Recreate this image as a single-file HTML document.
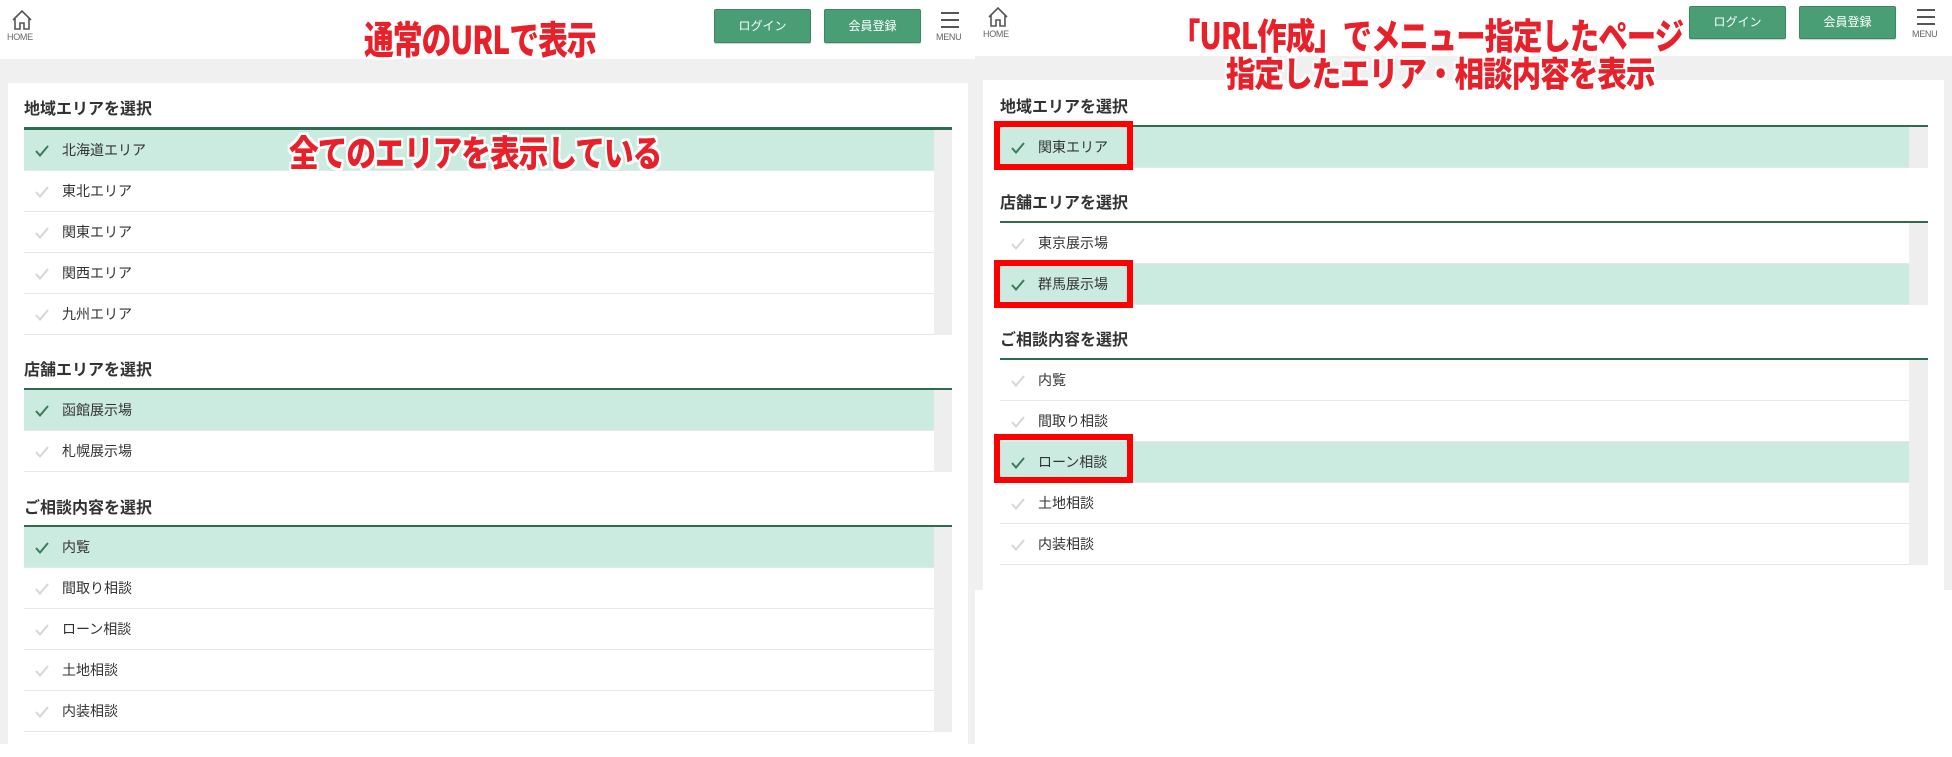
<!DOCTYPE html>
<html><head><meta charset="utf-8">
<style>
*{margin:0;padding:0;box-sizing:border-box}
body{width:1952px;height:757px;position:relative;background:#fff;overflow:hidden;font-family:"Liberation Sans","Noto Sans CJK JP",sans-serif;color:#333}
.a{position:absolute}
.gray{background:#f0f0f0}
.card{background:#fff}
.h{position:absolute;font-size:16px;font-weight:bold;color:#333;line-height:20px}
.line{position:absolute;height:3px;background:#2f6b4f}
.row{position:absolute;height:41px;border-bottom:1px solid #e6e6e6;background:#fff;font-size:14px;line-height:40px}
.row.on{background:#cbeae0}
.row svg{position:absolute;left:11px;top:15px}
.row span{position:absolute;left:38px;top:0}
.sb{position:absolute;background:#eee}
.btn{position:absolute;background:#4a9e76;border:1px solid #3d8563;border-radius:2px;color:#fff;font-size:12px;text-align:center;box-shadow:0 1px 1px rgba(0,0,0,.2)}
.small{position:absolute;font-size:9px;color:#666;letter-spacing:-0.3px}
.red{position:absolute;color:#e8202a;font-weight:900;font-family:"Noto Sans CJK JP",sans-serif;white-space:nowrap;letter-spacing:-1px;
text-shadow:2px 0 #fff,-2px 0 #fff,0 2px #fff,0 -2px #fff,2px 2px #fff,-2px -2px #fff,2px -2px #fff,-2px 2px #fff;transform-origin:0 0}
.box{position:absolute;border:6px solid #f00}
</style></head><body>

<!-- LEFT PANEL -->
<div class="a gray" style="left:0;top:59px;width:975px;height:685px"></div>
<div class="a card" style="left:8px;top:83px;width:960px;height:661px"></div>

<svg class="a" style="left:10px;top:9px" width="24" height="22" viewBox="0 0 24 22"><path d="M3 11 L12 2 L21 11 M5 9 V20 H10 V14 H14 V20 H19 V9" fill="none" stroke="#555" stroke-width="1.6"/></svg>
<div class="small" style="left:7px;top:32px">HOME</div>
<div class="red" style="left:364px;top:11px;font-size:32px;transform:scale(0.93,1.2)">通常のURLで表示</div>
<div class="btn" style="left:714px;top:9px;width:97px;height:34px;line-height:32px">ログイン</div>
<div class="btn" style="left:824px;top:9px;width:97px;height:34px;line-height:32px">会員登録</div>
<div class="a" style="left:941px;top:12px;width:18px;height:16px;border-top:2px solid #555;border-bottom:2px solid #555"><div style="margin-top:5px;height:2px;background:#555"></div></div>
<div class="small" style="left:936px;top:32px">MENU</div>

<div class="h" style="left:24px;top:100px">地域エリアを選択</div>
<div class="line" style="left:24px;top:127px;width:928px"></div>
<div class="sb" style="left:934px;top:130px;width:18px;height:205px"></div>

<div class="h" style="left:24px;top:361px">店舗エリアを選択</div>
<div class="line" style="left:24px;top:388px;width:928px"></div>
<div class="sb" style="left:934px;top:390px;width:18px;height:82px"></div>

<div class="h" style="left:24px;top:499px">ご相談内容を選択</div>
<div class="line" style="left:24px;top:525px;width:928px"></div>
<div class="sb" style="left:934px;top:527px;width:18px;height:205px"></div>

<div class="row on" style="left:24px;top:130px;width:910px"><svg width="14" height="12"><path d="M1 6 L5 10.5 L13 1" fill="none" stroke="#3b7a5b" stroke-width="2"/></svg><span>北海道エリア</span></div>
<div class="row" style="left:24px;top:171px;width:910px"><svg width="14" height="12"><path d="M1 6 L5 10.5 L13 1" fill="none" stroke="#d6d6d6" stroke-width="2"/></svg><span>東北エリア</span></div>
<div class="row" style="left:24px;top:212px;width:910px"><svg width="14" height="12"><path d="M1 6 L5 10.5 L13 1" fill="none" stroke="#d6d6d6" stroke-width="2"/></svg><span>関東エリア</span></div>
<div class="row" style="left:24px;top:253px;width:910px"><svg width="14" height="12"><path d="M1 6 L5 10.5 L13 1" fill="none" stroke="#d6d6d6" stroke-width="2"/></svg><span>関西エリア</span></div>
<div class="row" style="left:24px;top:294px;width:910px"><svg width="14" height="12"><path d="M1 6 L5 10.5 L13 1" fill="none" stroke="#d6d6d6" stroke-width="2"/></svg><span>九州エリア</span></div>

<div class="row on" style="left:24px;top:390px;width:910px"><svg width="14" height="12"><path d="M1 6 L5 10.5 L13 1" fill="none" stroke="#3b7a5b" stroke-width="2"/></svg><span>函館展示場</span></div>
<div class="row" style="left:24px;top:431px;width:910px"><svg width="14" height="12"><path d="M1 6 L5 10.5 L13 1" fill="none" stroke="#d6d6d6" stroke-width="2"/></svg><span>札幌展示場</span></div>

<div class="row on" style="left:24px;top:527px;width:910px"><svg width="14" height="12"><path d="M1 6 L5 10.5 L13 1" fill="none" stroke="#3b7a5b" stroke-width="2"/></svg><span>内覧</span></div>
<div class="row" style="left:24px;top:568px;width:910px"><svg width="14" height="12"><path d="M1 6 L5 10.5 L13 1" fill="none" stroke="#d6d6d6" stroke-width="2"/></svg><span>間取り相談</span></div>
<div class="row" style="left:24px;top:609px;width:910px"><svg width="14" height="12"><path d="M1 6 L5 10.5 L13 1" fill="none" stroke="#d6d6d6" stroke-width="2"/></svg><span>ローン相談</span></div>
<div class="row" style="left:24px;top:650px;width:910px"><svg width="14" height="12"><path d="M1 6 L5 10.5 L13 1" fill="none" stroke="#d6d6d6" stroke-width="2"/></svg><span>土地相談</span></div>
<div class="row" style="left:24px;top:691px;width:910px"><svg width="14" height="12"><path d="M1 6 L5 10.5 L13 1" fill="none" stroke="#d6d6d6" stroke-width="2"/></svg><span>内装相談</span></div>

<div class="red" style="left:289px;top:124px;font-size:30px;transform:scale(0.99,1.2)">全てのエリアを表示している</div>

<!-- RIGHT PANEL -->
<div class="a gray" style="left:975px;top:56px;width:977px;height:534px"></div>
<div class="a card" style="left:983px;top:80px;width:961px;height:510px"></div>

<svg class="a" style="left:986px;top:6px" width="24" height="22" viewBox="0 0 24 22"><path d="M3 11 L12 2 L21 11 M5 9 V20 H10 V14 H14 V20 H19 V9" fill="none" stroke="#555" stroke-width="1.6"/></svg>
<div class="small" style="left:983px;top:29px">HOME</div>
<div class="btn" style="left:1689px;top:6px;width:97px;height:33px;line-height:31px">ログイン</div>
<div class="btn" style="left:1799px;top:6px;width:97px;height:33px;line-height:31px">会員登録</div>
<div class="a" style="left:1917px;top:9px;width:18px;height:16px;border-top:2px solid #555;border-bottom:2px solid #555"><div style="margin-top:5px;height:2px;background:#555"></div></div>
<div class="small" style="left:1912px;top:29px">MENU</div>

<div class="h" style="left:1000px;top:98px">地域エリアを選択</div>
<div class="line" style="left:1000px;top:125px;width:928px"></div>
<div class="sb" style="left:1909px;top:127px;width:19px;height:41px"></div>

<div class="h" style="left:1000px;top:194px">店舗エリアを選択</div>
<div class="line" style="left:1000px;top:221px;width:928px"></div>
<div class="sb" style="left:1909px;top:223px;width:19px;height:82px"></div>

<div class="h" style="left:1000px;top:331px">ご相談内容を選択</div>
<div class="line" style="left:1000px;top:358px;width:928px"></div>
<div class="sb" style="left:1909px;top:360px;width:19px;height:205px"></div>

<div class="row on" style="left:1000px;top:127px;width:909px"><svg width="14" height="12"><path d="M1 6 L5 10.5 L13 1" fill="none" stroke="#3b7a5b" stroke-width="2"/></svg><span>関東エリア</span></div>

<div class="row" style="left:1000px;top:223px;width:909px"><svg width="14" height="12"><path d="M1 6 L5 10.5 L13 1" fill="none" stroke="#d6d6d6" stroke-width="2"/></svg><span>東京展示場</span></div>
<div class="row on" style="left:1000px;top:264px;width:909px"><svg width="14" height="12"><path d="M1 6 L5 10.5 L13 1" fill="none" stroke="#3b7a5b" stroke-width="2"/></svg><span>群馬展示場</span></div>

<div class="row" style="left:1000px;top:360px;width:909px"><svg width="14" height="12"><path d="M1 6 L5 10.5 L13 1" fill="none" stroke="#d6d6d6" stroke-width="2"/></svg><span>内覧</span></div>
<div class="row" style="left:1000px;top:401px;width:909px"><svg width="14" height="12"><path d="M1 6 L5 10.5 L13 1" fill="none" stroke="#d6d6d6" stroke-width="2"/></svg><span>間取り相談</span></div>
<div class="row on" style="left:1000px;top:442px;width:909px"><svg width="14" height="12"><path d="M1 6 L5 10.5 L13 1" fill="none" stroke="#3b7a5b" stroke-width="2"/></svg><span>ローン相談</span></div>
<div class="row" style="left:1000px;top:483px;width:909px"><svg width="14" height="12"><path d="M1 6 L5 10.5 L13 1" fill="none" stroke="#d6d6d6" stroke-width="2"/></svg><span>土地相談</span></div>
<div class="row" style="left:1000px;top:524px;width:909px"><svg width="14" height="12"><path d="M1 6 L5 10.5 L13 1" fill="none" stroke="#d6d6d6" stroke-width="2"/></svg><span>内装相談</span></div>

<div class="box" style="left:994px;top:121px;width:139px;height:49px"></div>
<div class="box" style="left:994px;top:260px;width:139px;height:48px"></div>
<div class="box" style="left:994px;top:434px;width:139px;height:49px"></div>

<div class="red" style="left:1171px;top:7px;font-size:30px;transform:scale(0.98,1.2)">「URL作成」でメニュー指定したページ</div>
<div class="red" style="left:1226px;top:47px;font-size:29px;transform:scale(1.02,1.2)">指定したエリア・相談内容を表示</div>

</body></html>
